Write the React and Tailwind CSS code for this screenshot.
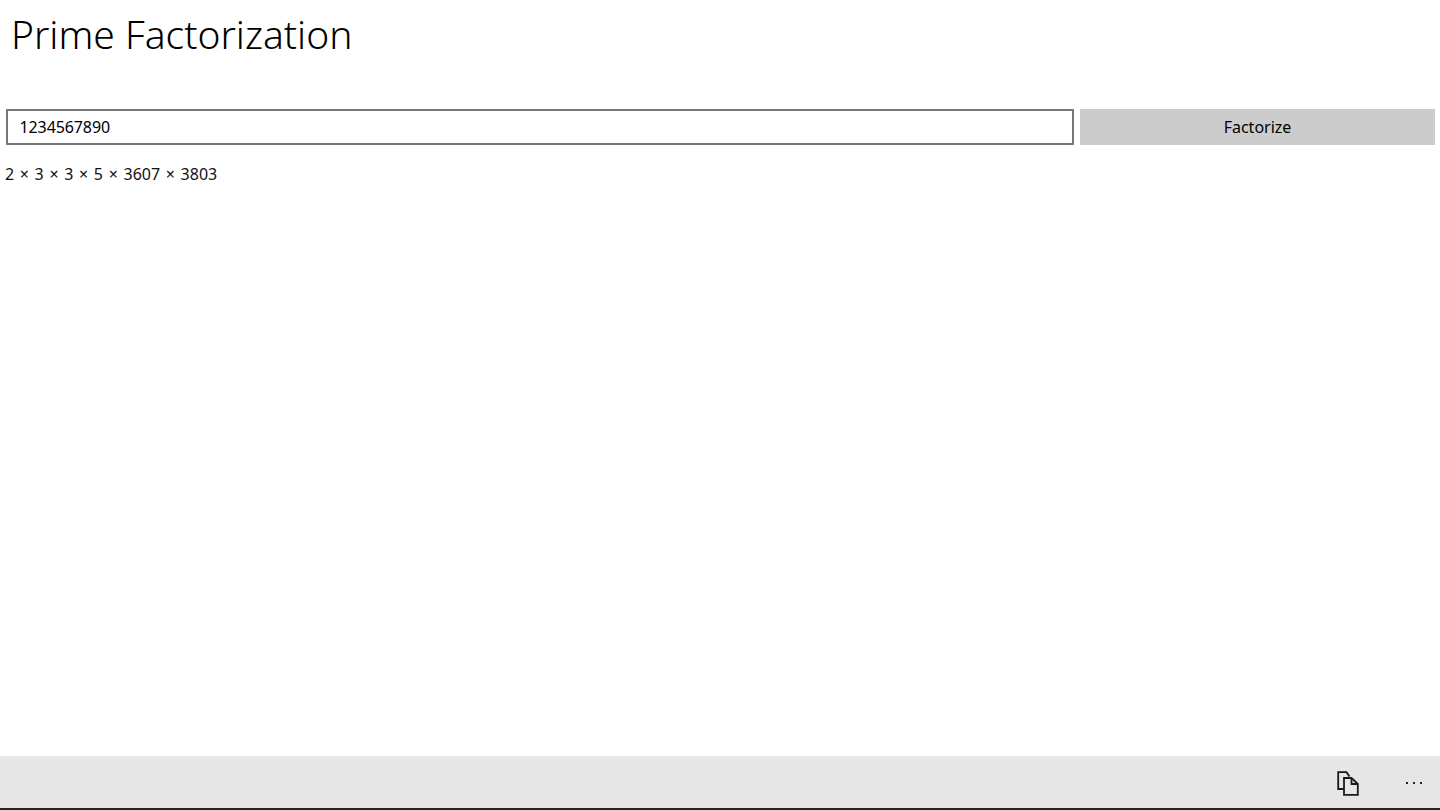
import React from "react";

const CopyIcon = () => (
  <svg width="22" height="25" viewBox="0 0 22 25" fill="none" stroke="#1a1a1a" strokeWidth="1.8">
    <path d="M7 18H1.2V1.2H9.5L12.5 5.5" />
    <path d="M7 7H14.5L20.8 13V23.8H7Z" fill="#e6e6e6" />
    <path d="M14.5 7V13H20.8" />
  </svg>
);

const App = () => {
  return (
    <div className="flex h-[810px] w-[1440px] flex-col bg-white font-['Noto_Sans',sans-serif] text-[#111]">
      {/* Title */}
      <h1 className="h-[109px] pl-[11px] pt-[5px] text-[39px] leading-[58px] font-[350] text-black">
        Prime Factorization
      </h1>

      {/* Input row */}
      <div className="flex h-9 gap-[6px] pl-[6px] pr-[5px]">
        <input
          readOnly
          value="1234567890"
          className="h-9 w-[1068px] border-[2.5px] border-[#777777] bg-white pl-[11.5px] text-base tracking-[-0.1px] text-black outline-none"
        />
        <button className="h-9 flex-1 bg-[#cccccc] text-base text-black">Factorize</button>
      </div>

      {/* Result */}
      <p className="mt-[17px] pl-[5px] text-base leading-[24px] [word-spacing:1.5px]">2 × 3 × 3 × 5 × 3607 × 3803</p>

      {/* App bar */}
      <div className="mt-auto flex h-[54px] items-center justify-end border-b-2 border-[#222] bg-[#e6e6e6] pr-[18px]">
        <div className="mt-[2px] mr-[47px] flex">
          <CopyIcon />
        </div>
        <div className="flex gap-[5px] pt-[2px]">
          <span className="h-[2px] w-[2px] bg-[#222]" />
          <span className="h-[2px] w-[2px] bg-[#222]" />
          <span className="h-[2px] w-[2px] bg-[#222]" />
        </div>
      </div>
    </div>
  );
};

export default App;
